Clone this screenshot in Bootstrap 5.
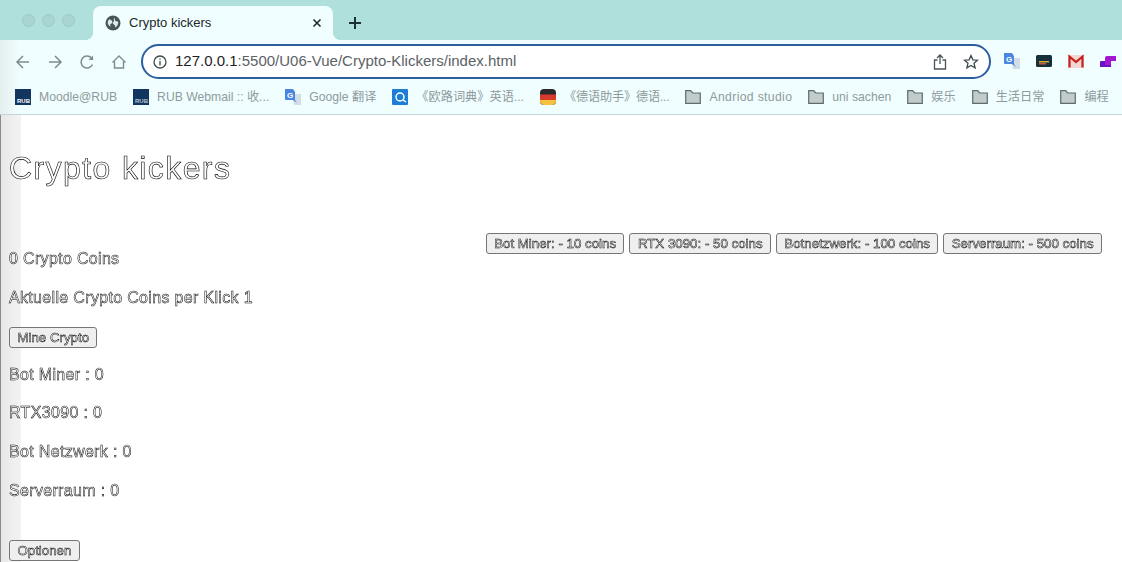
<!DOCTYPE html>
<html lang="en">
<head>
    <meta charset="UTF-8">
    <title>Crypto kickers</title>
    <link href="https://cdn.jsdelivr.net/npm/bootstrap@5.3.0/dist/css/bootstrap.min.css" rel="stylesheet">
    <style>
        html, body { height: 100%; }
        body { background: #fff; font-family: "Liberation Sans", "Noto Sans CJK SC", sans-serif; overflow: hidden; }
        .browser-top { height: 115px; background: linear-gradient(to right, #e4eeee 0, #f1feff 20px); border-bottom: 1px solid #c3d6d6; }
        .tab-strip { height: 40px; background: #b0e0dc; padding-left: 22px; }
        .traffic-set { gap: 7px; }
        .traffic { width: 13px; height: 13px; border-radius: 50%; background: #a9d5d0; border: 1px solid #a0c9c4; }
        .tab-active { position: relative; width: 240px; height: 34px; margin-left: 18px; padding: 0 11px 0 12px; background: #f1feff; border-radius: 8px 8px 0 0; font-size: 13px; color: #20282a; }
        .tab-active::before, .tab-active::after { content: ""; position: absolute; bottom: 0; width: 8px; height: 8px; }
        .tab-active::before { left: -8px; background: radial-gradient(circle at 0 0, transparent 8px, #f1feff 8px); }
        .tab-active::after { right: -8px; background: radial-gradient(circle at 100% 0, transparent 8px, #f1feff 8px); }
        .tab-title { flex: 1; padding-left: 8px; }
        .new-tab { margin-left: 15px; margin-top: 6px; }
        .tool-row { height: 41px; padding: 2px 0 0 14px; }
        .tool-icon { width: 18px; height: 18px; margin-right: 14px; }
        .url-box { width: 850px; height: 35px; margin-left: -1px; padding: 0 10px 0 10px; background: #fff; border: 2px solid #2c5ea0; border-radius: 18px; font-size: 15px; color: #5c6266; }
        .url-box b { font-weight: 400; color: #1f2326; }
        .url-text { flex: 1; padding-left: 8px; }
        .ext-row { margin-left: 13px; }
        .marks { height: 33px; padding-left: 15px; font-size: 12.2px; color: #8e9a9c; white-space: nowrap; }
        .mark-item { margin-right: 16px; }
        .mark-item svg { margin-right: 8px; flex: none; }
        .mark-tight { letter-spacing: -.2px; }
        .mark-wide { letter-spacing: .35px; }
        .page-wrap { position: relative; height: 447px; padding: 0 20px 0 9px; }
        .side-shade { position: absolute; left: 0; top: 0; bottom: 0; width: 21px; background: linear-gradient(to right, #8a8a8a 0, #8a8a8a 1px, #e8e8e8 1px, #f2f2f2 20px); }
        .page-body { position: relative; color: #fff; will-change: transform; }
        .outline-head { margin: 0; padding-top: 35px; font-size: 32px; line-height: 37px; font-weight: 400; letter-spacing: 1.4px; -webkit-text-stroke: .6px #000; }
        .outline-line { margin: 0; height: 38.6px; font-size: 16px; line-height: 18px; letter-spacing: .33px; -webkit-text-stroke: .5px #000; }
        .first-line { height: 55.6px; padding-top: 17px; }
        .old-btn { height: 21px; padding: 0 7.4px; font-size: 13.3px; line-height: 17px; color: #fff; -webkit-text-stroke: .5px #000; background: #efefef; border: 1px solid #767676; border-radius: 3px; white-space: nowrap; letter-spacing: 0; }
        .shop-row { gap: 5px; }
        .top-space { height: 46px; }
        .opt-line { margin-top: 20px; }
    </style>
</head>
<body>
<div class="browser-top">
    <div class="tab-strip d-flex align-items-end">
        <div class="d-flex traffic-set align-self-center">
            <span class="traffic"></span><span class="traffic"></span><span class="traffic"></span>
        </div>
        <div class="tab-active d-flex align-items-center">
            <svg width="16" height="16" viewBox="0 0 16 16"><circle cx="8" cy="8" r="7.5" fill="#4a5558"/><path d="M3 3c2 1 3 1 4 3s-1 3-2 3-1 2 0 4c-2-1-4-3-4-5s1-4 2-5zM10 1c1 2 0 3 1 4s3 0 4 2c0 3-2 6-4 7 0-2 0-3-2-4s-1-3 0-4-1-3 1-5z" fill="#f1feff" opacity=".9" transform="translate(2 2) scale(.75)"/></svg>
            <span class="tab-title">Crypto kickers</span>
            <svg width="10" height="10" viewBox="0 0 10 10"><path d="M1.500 1.500l7 7M8.500 1.500l-7 7" stroke="#20282a" stroke-width="1.600"/></svg>
        </div>
        <svg class="new-tab align-self-center" width="14" height="14" viewBox="0 0 14 14"><path d="M7 1v12M1 7h12" stroke="#1d3033" stroke-width="2"/></svg>
    </div>
    <div class="tool-row d-flex align-items-center">
        <svg class="tool-icon" viewBox="0 0 18 18" fill="none" stroke="#7f8c8e" stroke-width="1.500"><path d="M15 9H3M9 3L3 9l6 6"/></svg>
        <svg class="tool-icon" viewBox="0 0 18 18" fill="none" stroke="#7f8c8e" stroke-width="1.500"><path d="M3 9h12M9 3l6 6-6 6"/></svg>
        <svg class="tool-icon" viewBox="0 0 18 18" fill="none" stroke="#7f8c8e" stroke-width="1.500"><path d="M14.500 11.500A6 6 0 1 1 13.500 5L15 6.500"/><path d="M15 2.500v4.500h-4.500" fill="#7f8c8e" stroke="none"/></svg>
        <svg class="tool-icon" viewBox="0 0 18 18" fill="none" stroke="#7f8c8e" stroke-width="1.400"><path d="M2.500 9.500L9 3l6.500 6.500M4.500 8.500V15h9V8.500"/></svg>
        <div class="url-box d-flex align-items-center">
            <svg width="14" height="14" viewBox="0 0 14 14" fill="none" stroke="#3f4a4d" stroke-width="1.300"><circle cx="7" cy="7" r="6"/><path d="M7 6v4.500M7 3.500v1.300"/></svg>
            <span class="url-text"><b>127.0.0.1</b>:5500/U06-Vue/Crypto-Klickers/index.html</span>
            <svg class="me-3" width="14" height="16" viewBox="0 0 14 16" fill="none" stroke="#4a5558" stroke-width="1.300"><path d="M4.500 6H1.500v9h11V6h-3M7 10V1M4 4l3-3 3 3"/></svg>
            <svg width="16" height="16" viewBox="0 0 16 16" fill="none" stroke="#3f4a4d" stroke-width="1.300"><path d="M8 1.500l1.900 4.300 4.600.4-3.500 3 1.100 4.600L8 11.400l-4.100 2.400L5 9.200l-3.500-3 4.600-.4z"/></svg>
        </div>
        <div class="ext-row d-flex gap-3">
            <svg width="16" height="17" viewBox="0 0 16 17"><path d="M7 5h9v11H9z" fill="#d3dde6"/><path d="M0 0h8l2 3v8l2 3-4-3H1a1 1 0 0 1-1-1z" fill="#4a86e0"/><text x="2" y="9" font-size="8" font-weight="700" fill="#fff" font-family="Liberation Sans">G</text></svg>
            <svg width="16" height="16" viewBox="0 0 16 16"><rect y="2" width="16" height="12" rx="1.500" fill="#15303a"/><rect x="3" y="8" width="10" height="1.500" fill="#d9a93c"/><rect x="3" y="10" width="7" height="1.500" fill="#c65a3c"/></svg>
            <svg width="16" height="16" viewBox="0 0 16 16"><rect y="2" width="16" height="13" fill="#f3d7d4"/><path d="M1.500 14.500V3.500L8 9l6.500-5.500v11" fill="none" stroke="#c8201c" stroke-width="2.200"/></svg>
            <svg width="16" height="16" viewBox="0 0 16 16"><path d="M5 8h6v6H0V9a1 1 0 0 1 1-1z" fill="#6a12c8"/><path d="M7 3h9v5h-5v4H5V5a2 2 0 0 1 2-2z" fill="#a018d0"/></svg>
        </div>
    </div>
    <div class="marks d-flex align-items-center">
        <span class="mark-item d-flex align-items-center"><svg width="16" height="16" viewBox="0 0 16 16"><rect width="16" height="16" fill="#12365f"/><text x="2" y="14" font-size="6" font-weight="700" fill="#fff" font-family="Liberation Sans">RUB</text></svg>Moodle@RUB</span>
        <span class="mark-item d-flex align-items-center"><svg width="16" height="16" viewBox="0 0 16 16"><rect width="16" height="16" fill="#12365f"/><text x="2" y="14" font-size="6" font-weight="700" fill="#b9c6d6" font-family="Liberation Sans">RUB</text></svg>RUB Webmail :: 收...</span>
        <span class="mark-item d-flex align-items-center"><svg width="16" height="17" viewBox="0 0 16 17"><path d="M7 5h9v11H9z" fill="#d3dde6"/><path d="M0 0h8l2 3v8l2 3-4-3H1a1 1 0 0 1-1-1z" fill="#4a86e0"/><text x="2" y="9" font-size="8" font-weight="700" fill="#fff" font-family="Liberation Sans">G</text></svg>Google 翻译</span>
        <span class="mark-item d-flex align-items-center"><svg width="16" height="16" viewBox="0 0 16 16"><rect width="16" height="16" rx="1" fill="#1c7ed6"/><circle cx="8" cy="8" r="4" fill="none" stroke="#fff" stroke-width="1.500"/><path d="M11 11l3 2" stroke="#fff" stroke-width="1.500"/></svg>《欧路词典》英语...</span>
        <span class="mark-item mark-tight d-flex align-items-center"><svg width="16" height="16" viewBox="0 0 16 16"><rect width="16" height="16" rx="4" fill="#2a2a2a"/><rect y="5.500" width="16" height="5.500" fill="#d83a2c"/><path d="M0 11h16v1c0 2-2 4-4 4H4c-2 0-4-2-4-4z" fill="#f5c33b"/></svg>《德语助手》德语...</span>
        <span class="mark-item mark-wide d-flex align-items-center"><svg width="16" height="14" viewBox="0 0 16 14"><path d="M.7 13.300V.7h5l2 2.300h7.600v10.300z" fill="#c2cccb" stroke="#5f6b6c" stroke-width="1.200"/></svg>Andriod studio</span>
        <span class="mark-item d-flex align-items-center"><svg width="16" height="14" viewBox="0 0 16 14"><path d="M.7 13.300V.7h5l2 2.300h7.600v10.300z" fill="#c2cccb" stroke="#5f6b6c" stroke-width="1.200"/></svg>uni sachen</span>
        <span class="mark-item d-flex align-items-center"><svg width="16" height="14" viewBox="0 0 16 14"><path d="M.7 13.300V.7h5l2 2.300h7.600v10.300z" fill="#c2cccb" stroke="#5f6b6c" stroke-width="1.200"/></svg>娱乐</span>
        <span class="mark-item d-flex align-items-center"><svg width="16" height="14" viewBox="0 0 16 14"><path d="M.7 13.300V.7h5l2 2.300h7.600v10.300z" fill="#c2cccb" stroke="#5f6b6c" stroke-width="1.200"/></svg>生活日常</span>
        <span class="mark-item d-flex align-items-center"><svg width="16" height="14" viewBox="0 0 16 14"><path d="M.7 13.300V.7h5l2 2.300h7.600v10.300z" fill="#c2cccb" stroke="#5f6b6c" stroke-width="1.200"/></svg>编程</span>
    </div>
</div>
<div class="page-wrap">
    <div class="side-shade"></div>
    <div class="page-body">
        <h1 class="outline-head">Crypto kickers</h1>
        <div class="top-space"></div>
        <div class="d-flex float-end shop-row">
            <button class="old-btn">Bot Miner: - 10 coins</button>
            <button class="old-btn">RTX 3090: - 50 coins</button>
            <button class="old-btn">Botnetzwerk: - 100 coins</button>
            <button class="old-btn">Serverraum: - 500 coins</button>
        </div>
        <p class="outline-line first-line">0 Crypto Coins</p>
        <p class="outline-line">Aktuelle Crypto Coins per Klick 1</p>
        <div class="outline-line"><button class="old-btn">Mine Crypto</button></div>
        <p class="outline-line">Bot Miner : 0</p>
        <p class="outline-line">RTX3090 : 0</p>
        <p class="outline-line">Bot Netzwerk : 0</p>
        <p class="outline-line">Serverraum : 0</p>
        <div class="outline-line opt-line"><button class="old-btn">Optionen</button></div>
    </div>
</div>
<script src="https://cdn.jsdelivr.net/npm/bootstrap@5.3.0/dist/js/bootstrap.bundle.min.js"></script>
</body>
</html>
